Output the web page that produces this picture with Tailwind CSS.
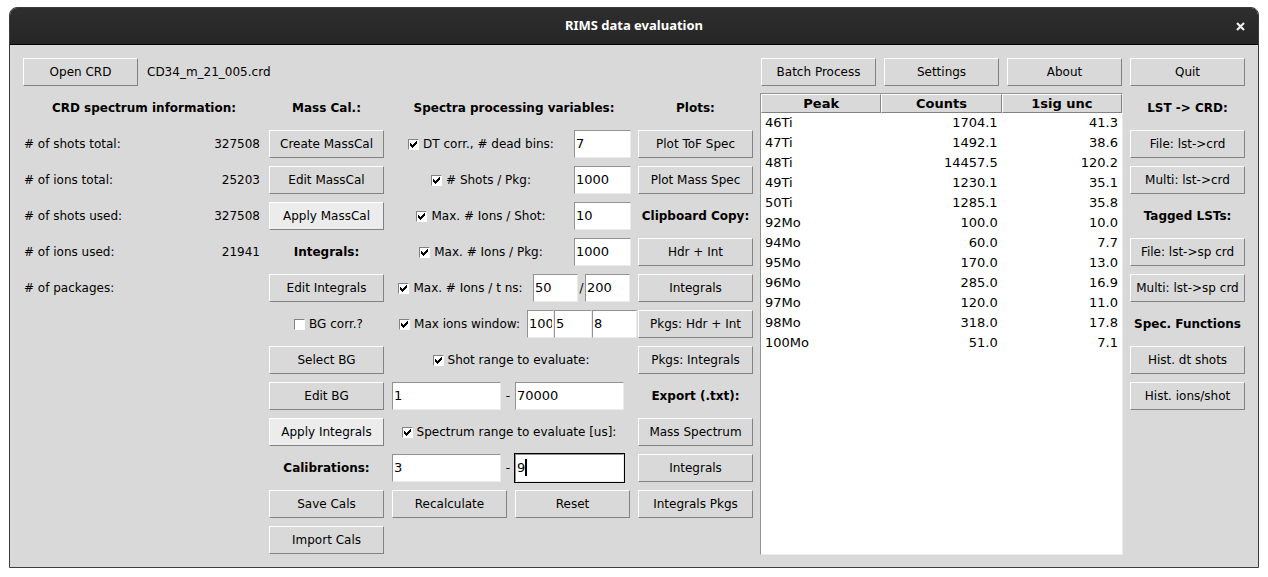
<!DOCTYPE html>
<html lang="en">
<head>
<meta charset="utf-8">
<title>RIMS data evaluation</title>
<script src="https://cdn.jsdelivr.net/npm/@tailwindcss/browser@4"></script>
</head>
<body class="bg-white px-[9px] pt-[7px] font-['DejaVu_Sans',sans-serif] text-xs text-black">
<svg class="hidden"><symbol id="tick" viewBox="0 0 7 7"><path d="M0 2h1v1h1v1h1v-1h1v-1h1v-1h1v-1h1v3h-1v1h-1v1h-1v1h-1v1h-1v-1h-1v-1h-1z" fill="#000"/></symbol></svg>
<main class="overflow-hidden rounded-t-lg border border-[#3c3c3c] bg-[#d9d9d9]">
  <header class="grid h-[37px] grid-cols-[1fr_auto_1fr] items-center border-b border-black bg-linear-to-b from-[#2e2e2e] to-[#262626] px-[13px] text-white">
    <h1 class="col-start-2 font-['Noto_Sans',sans-serif] text-[13px] font-bold">RIMS data evaluation</h1>
    <button aria-label="Close" class="justify-self-end"><svg class="size-[9px]" viewBox="0 0 9 9"><path d="M1 1l7 7M8 1l-7 7" stroke="#eee" stroke-width="2.2"/></svg></button>
  </header>
  <div class="grid auto-rows-[28px] grid-cols-10 items-center gap-2 p-[13px] whitespace-nowrap [&_h2]:text-center [&_h2]:font-bold [&>button]:h-full [&>button]:border [&>button]:border-t-white [&>button]:border-l-white [&>button]:border-r-[#828282] [&>button]:border-b-[#828282] [&_input[type=text]]:h-7 [&_input[type=text]]:min-w-0 [&_input[type=text]]:border [&_input[type=text]]:border-t-[#929292] [&_input[type=text]]:border-l-[#929292] [&_input[type=text]]:border-r-[#ebebeb] [&_input[type=text]]:border-b-[#ebebeb] [&_input[type=text]]:bg-white [&_input[type=text]]:px-px [&_input[type=text]]:pb-0.5 [&_input[type=text]]:text-[13px] [&_label]:flex [&_label]:items-center [&_label]:justify-center [&_label]:gap-1 [&_label>span]:grid [&_label>span]:place-items-center [&_input[type=checkbox]]:size-[11px] [&_input[type=checkbox]]:appearance-none [&_input[type=checkbox]]:border [&_input[type=checkbox]]:border-t-[#828282] [&_input[type=checkbox]]:border-l-[#828282] [&_input[type=checkbox]]:border-r-white [&_input[type=checkbox]]:border-b-white [&_input[type=checkbox]]:bg-white [&_label_*]:[grid-area:1/1] [&_svg]:size-[7px]">
    <button class="col-start-1 row-start-1">Open CRD</button>
    <p class="col-span-3 col-start-2 row-start-1 px-px">CD34_m_21_005.crd</p>
    <button class="col-start-7 row-start-1">Batch Process</button>
    <button class="col-start-8 row-start-1">Settings</button>
    <button class="col-start-9 row-start-1">About</button>
    <button class="col-start-10 row-start-1">Quit</button>

    <h2 class="col-span-2 col-start-1 row-start-2 pl-1">CRD spectrum information:</h2>
    <dl class="col-span-2 col-start-1 row-span-5 row-start-3 grid auto-rows-[28px] grid-cols-[1fr_auto] items-center gap-y-2 self-start px-px [&_dd]:text-right">
      <dt># of shots total:</dt><dd>327508</dd>
      <dt># of ions total:</dt><dd>25203</dd>
      <dt># of shots used:</dt><dd>327508</dd>
      <dt># of ions used:</dt><dd>21941</dd>
      <dt># of packages:</dt><dd></dd>
    </dl>

    <h2 class="col-start-3 row-start-2">Mass Cal.:</h2>
    <button class="col-start-3 row-start-3">Create MassCal</button>
    <button class="col-start-3 row-start-4">Edit MassCal</button>
    <button class="col-start-3 row-start-5 bg-[#ececec]">Apply MassCal</button>
    <h2 class="col-start-3 row-start-6">Integrals:</h2>
    <button class="col-start-3 row-start-7">Edit Integrals</button>
    <label class="col-start-3 row-start-8 pl-1"><span><input type="checkbox"></span>BG corr.?</label>
    <button class="col-start-3 row-start-9">Select BG</button>
    <button class="col-start-3 row-start-10">Edit BG</button>
    <button class="col-start-3 row-start-11 bg-[#ececec]">Apply Integrals</button>
    <h2 class="col-start-3 row-start-12">Calibrations:</h2>
    <button class="col-start-3 row-start-13">Save Cals</button>
    <button class="col-start-3 row-start-14">Import Cals</button>

    <h2 class="col-span-2 col-start-4 row-start-2 pl-1.5">Spectra processing variables:</h2>
    <div class="col-span-2 col-start-4 row-start-3 -mr-px flex">
      <label class="flex-1 pr-1"><span><input type="checkbox" checked><svg><use href="#tick"/></svg></span>DT corr., # dead bins:</label>
      <input type="text" aria-label="Dead bins" value="7" class="w-[57px]">
    </div>
    <div class="col-span-2 col-start-4 row-start-4 -mr-px flex">
      <label class="flex-1 pr-1"><span><input type="checkbox" checked><svg><use href="#tick"/></svg></span># Shots / Pkg:</label>
      <input type="text" aria-label="Shots per package" value="1000" class="w-[57px]">
    </div>
    <div class="col-span-2 col-start-4 row-start-5 -mr-px flex">
      <label class="flex-1 pr-1"><span><input type="checkbox" checked><svg><use href="#tick"/></svg></span>Max. # Ions / Shot:</label>
      <input type="text" aria-label="Maximum ions per shot" value="10" class="w-[57px]">
    </div>
    <div class="col-span-2 col-start-4 row-start-6 -mr-px flex">
      <label class="flex-1 pr-1"><span><input type="checkbox" checked><svg><use href="#tick"/></svg></span>Max. # Ions / Pkg:</label>
      <input type="text" aria-label="Maximum ions per package" value="1000" class="w-[57px]">
    </div>
    <div class="col-span-2 col-start-4 row-start-7 flex items-center">
      <label class="flex-1 pr-1"><span><input type="checkbox" checked><svg><use href="#tick"/></svg></span>Max. # Ions / t ns:</label>
      <input type="text" aria-label="Maximum ions" value="50" class="w-[45px]">
      <span class="w-[7px] text-center">/</span>
      <input type="text" aria-label="Time in ns" value="200" class="w-[45px]">
    </div>
    <div class="col-span-2 col-start-4 row-start-8 -mr-[7px] flex">
      <label class="flex-1"><span><input type="checkbox" checked><svg><use href="#tick"/></svg></span>Max ions window:</label>
      <input type="text" aria-label="Window ions" value="100" class="w-[27px]">
      <input type="text" aria-label="Window start" value="5" class="w-[38px]">
      <input type="text" aria-label="Window end" value="8" class="w-[45px]">
    </div>
    <label class="col-span-2 col-start-4 row-start-9"><span><input type="checkbox" checked><svg><use href="#tick"/></svg></span>Shot range to evaluate:</label>
    <div class="col-span-2 col-start-4 row-start-10 grid grid-cols-[1fr_14px_1fr] items-center pr-1.5">
      <input type="text" aria-label="First shot" value="1" class="w-full">
      <span class="text-center">-</span>
      <input type="text" aria-label="Last shot" value="70000" class="w-full">
    </div>
    <label class="col-span-2 col-start-4 row-start-11 pr-1"><span><input type="checkbox" checked><svg><use href="#tick"/></svg></span>Spectrum range to evaluate [us]:</label>
    <div class="col-span-2 col-start-4 row-start-12 grid grid-cols-[1fr_14px_1fr] items-center pr-1.5">
      <input type="text" aria-label="Range start" value="3" class="w-full">
      <span class="text-center">-</span>
      <div class="relative flex">
        <input type="text" aria-label="Range end" value="9" class="w-full outline outline-black">
        <span class="absolute top-[5px] left-[10px] h-[17px] w-0.5 bg-black"></span>
      </div>
    </div>
    <button class="col-start-4 row-start-13">Recalculate</button>
    <button class="col-start-5 row-start-13">Reset</button>

    <h2 class="col-start-6 row-start-2">Plots:</h2>
    <button class="col-start-6 row-start-3">Plot ToF Spec</button>
    <button class="col-start-6 row-start-4">Plot Mass Spec</button>
    <h2 class="col-start-6 row-start-5">Clipboard Copy:</h2>
    <button class="col-start-6 row-start-6">Hdr + Int</button>
    <button class="col-start-6 row-start-7">Integrals</button>
    <button class="col-start-6 row-start-8">Pkgs: Hdr + Int</button>
    <button class="col-start-6 row-start-9">Pkgs: Integrals</button>
    <h2 class="col-start-6 row-start-10">Export (.txt):</h2>
    <button class="col-start-6 row-start-11">Mass Spectrum</button>
    <button class="col-start-6 row-start-12">Integrals</button>
    <button class="col-start-6 row-start-13">Integrals Pkgs</button>

    <div class="col-span-3 col-start-7 row-span-13 row-start-2 -m-px self-stretch border border-t-[#929292] border-r-[#ebebeb] border-b-[#ebebeb] border-l-[#929292] bg-white">
      <table class="w-full table-fixed border-separate border-spacing-0 text-[13px] leading-5 [&_td]:h-5 [&_td]:p-0 [&_td]:px-1 [&_td]:text-right [&_td:first-child]:text-left [&_th]:h-[19px] [&_th]:border [&_th]:border-t-white [&_th]:border-r-[#828282] [&_th]:border-b-[#828282] [&_th]:border-l-white [&_th]:bg-[#d9d9d9] [&_th]:p-0 [&_th]:leading-[17px]">
        <thead><tr><th>Peak</th><th>Counts</th><th>1sig unc</th></tr></thead>
        <tbody>
          <tr><td>46Ti</td><td>1704.1</td><td>41.3</td></tr>
          <tr><td>47Ti</td><td>1492.1</td><td>38.6</td></tr>
          <tr><td>48Ti</td><td>14457.5</td><td>120.2</td></tr>
          <tr><td>49Ti</td><td>1230.1</td><td>35.1</td></tr>
          <tr><td>50Ti</td><td>1285.1</td><td>35.8</td></tr>
          <tr><td>92Mo</td><td>100.0</td><td>10.0</td></tr>
          <tr><td>94Mo</td><td>60.0</td><td>7.7</td></tr>
          <tr><td>95Mo</td><td>170.0</td><td>13.0</td></tr>
          <tr><td>96Mo</td><td>285.0</td><td>16.9</td></tr>
          <tr><td>97Mo</td><td>120.0</td><td>11.0</td></tr>
          <tr><td>98Mo</td><td>318.0</td><td>17.8</td></tr>
          <tr><td>100Mo</td><td>51.0</td><td>7.1</td></tr>
        </tbody>
      </table>
    </div>

    <h2 class="col-start-10 row-start-2">LST -&gt; CRD:</h2>
    <button class="col-start-10 row-start-3">File: lst-&gt;crd</button>
    <button class="col-start-10 row-start-4">Multi: lst-&gt;crd</button>
    <h2 class="col-start-10 row-start-5">Tagged LSTs:</h2>
    <button class="col-start-10 row-start-6">File: lst-&gt;sp crd</button>
    <button class="col-start-10 row-start-7">Multi: lst-&gt;sp crd</button>
    <h2 class="col-start-10 row-start-8">Spec. Functions</h2>
    <button class="col-start-10 row-start-9">Hist. dt shots</button>
    <button class="col-start-10 row-start-10">Hist. ions/shot</button>
  </div>
</main>
</body>
</html>
